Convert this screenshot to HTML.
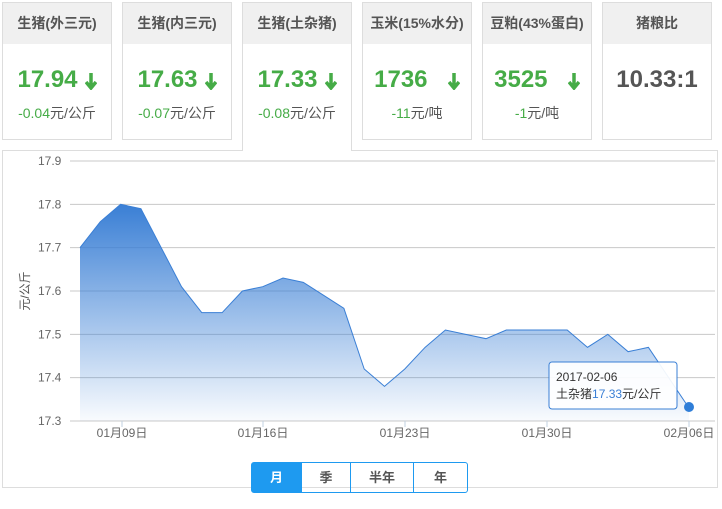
<!DOCTYPE html>
<html><head><meta charset="utf-8"><style>
body{margin:0;width:722px;height:509px;background:#fff;font-family:"Liberation Sans","Noto Sans CJK SC",sans-serif;position:relative;overflow:hidden}
.card{position:absolute;top:2px;width:108px;height:136px;border:1px solid #ddd;background:#fff;box-sizing:content-box}
.card .h{height:41px;background:#f0f0f0;text-align:center;line-height:41px;font-size:14px;font-weight:bold;color:#555}
.card .v{text-align:center;font-size:24px;font-weight:bold;color:#46ac47;margin-top:21px;height:30px;line-height:30px}
.card .s{text-align:center;font-size:14px;color:#555;margin-top:8px}
.card .s b{font-weight:normal;color:#46ac47}
.arr{display:inline-block;vertical-align:middle;margin-left:7px}
.act{height:148px;border-bottom:none;z-index:2}
.panel{position:absolute;left:2px;top:150px;width:714px;height:336px;border:1px solid #ddd}
.btns{position:absolute;left:251px;top:462px;height:29px;border:1px solid #1e9af0;border-radius:3px;display:flex;font-size:13px;font-weight:bold;color:#555}
.btns div{border-left:1px solid #1e9af0;text-align:center;line-height:29px}
.btns div:first-child{border:none;background:#1e9af0;color:#fff}
</style></head><body>
<div class="card" style="left:2px"><div class="h">生猪(外三元)</div><div class="v">17.94<svg class="arr" width="12" height="18"><path d="M6 1V15M1 10L6 16 11 10" stroke="#46ac47" stroke-width="3.5" fill="none"/></svg></div><div class="s"><b>-0.04</b>元/公斤</div></div>
<div class="card" style="left:122px"><div class="h">生猪(内三元)</div><div class="v">17.63<svg class="arr" width="12" height="18"><path d="M6 1V15M1 10L6 16 11 10" stroke="#46ac47" stroke-width="3.5" fill="none"/></svg></div><div class="s"><b>-0.07</b>元/公斤</div></div>
<div class="card act" style="left:242px"><div class="h">生猪(土杂猪)</div><div class="v">17.33<svg class="arr" width="12" height="18"><path d="M6 1V15M1 10L6 16 11 10" stroke="#46ac47" stroke-width="3.5" fill="none"/></svg></div><div class="s"><b>-0.08</b>元/公斤</div></div>
<div class="card" style="left:362px"><div class="h">玉米(15%水分)</div><div class="v">1736 &nbsp;<svg class="arr" width="12" height="18"><path d="M6 1V15M1 10L6 16 11 10" stroke="#46ac47" stroke-width="3.5" fill="none"/></svg></div><div class="s"><b>-11</b>元/吨</div></div>
<div class="card" style="left:482px"><div class="h">豆粕(43%蛋白)</div><div class="v">3525 &nbsp;<svg class="arr" width="12" height="18"><path d="M6 1V15M1 10L6 16 11 10" stroke="#46ac47" stroke-width="3.5" fill="none"/></svg></div><div class="s"><b>-1</b>元/吨</div></div>
<div class="card" style="left:602px"><div class="h">猪粮比</div><div class="v" style="color:#555">10.33:1</div></div>
<div class="panel"></div>
<svg id="ch" width="722" height="509" style="position:absolute;left:0;top:0;z-index:3">
<defs><linearGradient id="g" x1="0" y1="0" x2="0" y2="1"><stop offset="0" stop-color="#3a7fd5"/><stop offset="1" stop-color="#3a7fd5" stop-opacity="0.03"/></linearGradient></defs>
<g id="grid" stroke="#c8c8c8" stroke-width="1"></g>
<g font-size="12" fill="#666" id="lab"></g>
<path id="area" fill="url(#g)"/>
<path id="line" fill="none" stroke="#3a7fd5" stroke-width="1"/>
<circle cx="689" cy="407" r="5" fill="#2f7ed8"/>
<text transform="translate(29,291) rotate(-90)" text-anchor="middle" font-size="12" fill="#555">元/公斤</text>
<rect x="549" y="362" width="128" height="47" rx="3" fill="#fff" fill-opacity="0.92" stroke="#3a7fd5"/>
<text x="556" y="381" font-size="12" fill="#333">2017-02-06</text>
<text x="556" y="398" font-size="12" fill="#333">土杂猪<tspan fill="#3a7fd5">17.33</tspan>元/公斤</text>
</svg>
<div class="btns" style="z-index:4"><div style="width:49px">月</div><div style="width:48px">季</div><div style="width:62px">半年</div><div style="width:53px">年</div></div>
<script>
var v=[17.70,17.76,17.80,17.79,17.70,17.61,17.55,17.55,17.60,17.61,17.63,17.62,17.59,17.56,17.42,17.38,17.42,17.47,17.51,17.50,17.49,17.51,17.51,17.51,17.51,17.47,17.50,17.46,17.47,17.40,17.33];
function Y(a){return 421-(a-17.3)*433.3}
var g=document.getElementById('grid'),l=document.getElementById('lab'),s='';
for(var i=0;i<7;i++){var val=17.3+i*0.1,y=Y(val);s+='<line x1="70" x2="715" y1="'+y+'" y2="'+y+'"/>';l.innerHTML+='<text x="38" y="'+(y+4)+'">'+val.toFixed(1)+'</text>';}
g.innerHTML=s;
var t=[['01月09日',122],['01月16日',263],['01月23日',405],['01月30日',547],['02月06日',689]];
t.forEach(function(p){g.innerHTML+='<line stroke="#c0d0e0" x1="'+p[1]+'" x2="'+p[1]+'" y1="421" y2="427"/>';l.innerHTML+='<text x="'+p[1]+'" y="437" text-anchor="middle">'+p[0]+'</text>';});
var d='';v.forEach(function(a,i){d+=(i?'L':'M')+(80+i*20.3)+' '+Y(a)});
document.getElementById('line').setAttribute('d',d);
document.getElementById('area').setAttribute('d',d+'L'+(80+30*20.3)+' 421L80 421Z');
</script>
</body></html>
